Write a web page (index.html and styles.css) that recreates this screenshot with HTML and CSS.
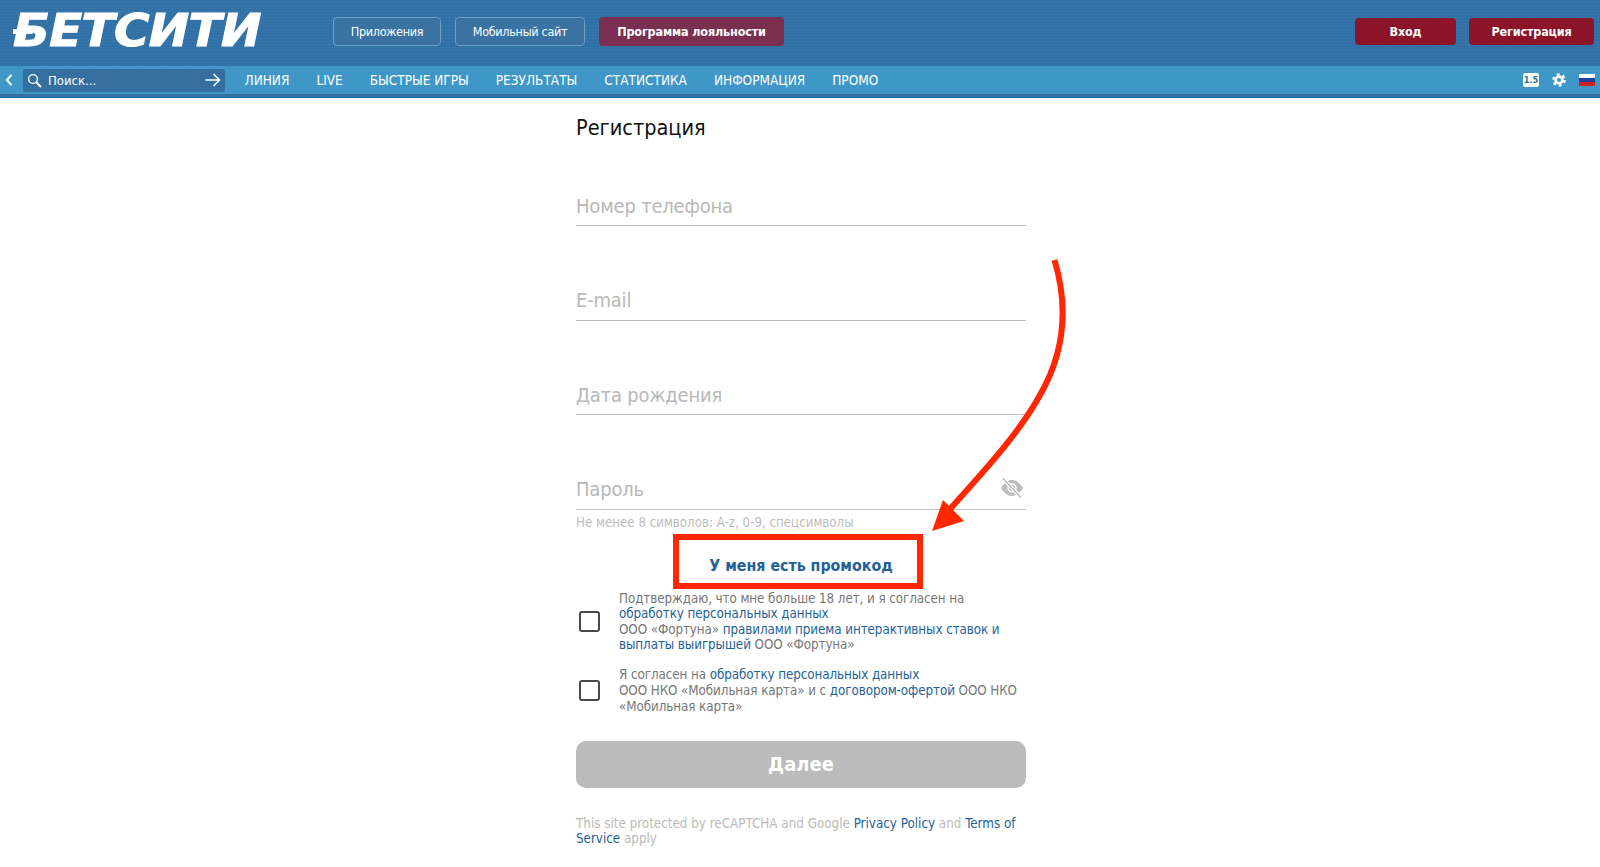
FILE: index.html
```html
<!DOCTYPE html>
<html lang="ru">

<head>
    <meta charset="utf-8">
    <title>Регистрация</title>
    <link rel="stylesheet" href="styles.css">
</head>

<body>
    <header class="top">
        <div class="logo-wrap"><a class="logo">БЕТСИТИ</a></div>
        <div class="top-links">
            <a class="btn btn-outline btn-apps">Приложения</a>
            <a class="btn btn-outline btn-mobile">Мобильный сайт</a>
            <a class="btn btn-loyal">Программа лояльности</a>
        </div>
        <div class="top-auth">
            <a class="btn btn-red btn-login">Вход</a>
            <a class="btn btn-red btn-signup">Регистрация</a>
        </div>
    </header>

    <nav class="nav">
        <svg class="nav-back" width="8" height="12" viewBox="0 0 8 12">
            <path d="M6.5 1 L1.8 6 L6.5 11" fill="none" stroke="#fff" stroke-width="2" />
        </svg>
        <div class="search">
            <svg width="15" height="15" viewBox="0 0 15 15">
                <circle cx="6" cy="6" r="4.4" fill="none" stroke="#fff" stroke-width="1.4" />
                <path d="M9.4 9.4 L14 14" stroke="#fff" stroke-width="2" />
            </svg>
            <input type="text" placeholder="Поиск...">
            <svg width="16" height="14" viewBox="0 0 16 14">
                <path d="M0.5 7 H14.5 M8.5 1 L14.5 7 L8.5 13" fill="none" stroke="#fff" stroke-width="1.5" />
            </svg>
        </div>
        <ul class="menu">
            <li>ЛИНИЯ</li>
            <li>LIVE</li>
            <li>БЫСТРЫЕ ИГРЫ</li>
            <li>РЕЗУЛЬТАТЫ</li>
            <li>СТАТИСТИКА</li>
            <li>ИНФОРМАЦИЯ</li>
            <li>ПРОМО</li>
        </ul>
        <div class="nav-tools">
            <span class="odds">1.5</span>
            <svg width="14" height="14" viewBox="0 0 14 14">
                <circle cx="7" cy="7" r="3.4" fill="none" stroke="#fff" stroke-width="2.6" />
                <circle cx="7" cy="7" r="5.6" fill="none" stroke="#fff" stroke-width="2.4" stroke-dasharray="2.9 2.96" />
            </svg>
            <span class="flag"></span>
        </div>
    </nav>
    <div class="nav-edge"></div>

    <main class="signup">
        <h1>Регистрация</h1>

        <div class="fields">
            <div class="field"><input type="text" placeholder="Номер телефона"></div>
            <div class="field"><input type="text" placeholder="E-mail"></div>
            <div class="field"><input type="text" placeholder="Дата рождения"></div>
            <div class="field">
                <input type="password" placeholder="Пароль">
                <svg class="eye" width="24" height="20" viewBox="0 0 24 20">
                    <path d="M1 10 C5 3.5 9 2 12 2 C15 2 19 3.5 23 10 C19 16.500 15 18 12 18 C9 18 5 16.500 1 10 Z" fill="#bdbdbd" />
                    <circle cx="12" cy="10" r="4" fill="none" stroke="#fff" stroke-width="1.500" />
                    <path d="M3 0.500 L21 19.500" stroke="#fff" stroke-width="3.600" />
                    <path d="M3 0.500 L21 19.500" stroke="#bdbdbd" stroke-width="1.500" />
                </svg>
            </div>
        </div>
        <p class="hint">Не менее 8 символов: A-z, 0-9, спецсимволы</p>

        <a class="promo">У меня есть промокод</a>

        <label class="agree agree-first">
            <input type="checkbox">
            <span>Подтверждаю, что мне больше 18 лет, и я согласен на<br>
                <a>обработку персональных данных</a><br>
                ООО «Фортуна» <a>правилами приема интерактивных ставок и</a><br>
                <a>выплаты выигрышей</a> ООО «Фортуна»</span>
        </label>
        <label class="agree">
            <input type="checkbox">
            <span>Я согласен на <a>обработку персональных данных</a><br>
                ООО НКО «Мобильная карта» и с <a>договором-офертой</a> ООО НКО<br>
                «Мобильная карта»</span>
        </label>

        <button class="next" type="button">Далее</button>

        <p class="recaptcha">This site protected by reCAPTCHA and Google <a>Privacy Policy</a> and <a>Terms of</a><br>
            <a>Service</a> apply</p>
    </main>

    <div class="mark-box"></div>
    <svg class="mark-arrow" width="150" height="290" viewBox="920 250 150 290">
        <path d="M1054.500 260 C1068 305 1066 350 1040 395 C1020 432 985 470 950 509" fill="none" stroke="#ff2600" stroke-width="6" />
        <path d="M932 531 L943 500 L964 521 Z" fill="#ff2600" />
    </svg>
</body>

</html>
```

FILE: styles.css
```css
* {
    box-sizing: border-box;
}

body {
    margin: 0;
    background-color: white;
    font-family: "DejaVu Sans Condensed", "DejaVu Sans", sans-serif;
    font-stretch: condensed;
    color: #777;
}

a {
    color: #1f6298;
}

.top {
    display: flex;
    align-items: center;
    height: 66px;
    padding: 0 6px 4px 13px;
    background-color: #3172a8;
    background-image:
        repeating-linear-gradient(0deg, rgba(255, 255, 255, 0.03) 0 1px, transparent 1px 3px),
        repeating-linear-gradient(90deg, rgba(0, 0, 0, 0.03) 0 1px, transparent 1px 3px);
}

.logo-wrap {
    width: 320px;
}

.logo {
    position: relative;
    display: inline-block;
    color: white;
    font-size: 44px;
    font-weight: bold;
    font-style: italic;
    font-stretch: normal;
    line-height: 44px;
    letter-spacing: -0.5px;
    -webkit-text-stroke: 1px white;
    transform: scaleX(1.22);
    transform-origin: left center;
}

.logo::before {
    content: "";
    position: absolute;
    left: 0;
    top: 20px;
    width: 16px;
    height: 5px;
    background-color: white;
}

.top-links {
    display: flex;
    gap: 14px;
}

.top-auth {
    display: flex;
    gap: 13px;
    margin-left: auto;
}

.btn {
    display: flex;
    align-items: center;
    justify-content: center;
    height: 29px;
    border-radius: 4px;
    color: white;
    font-size: 12.500px;
    letter-spacing: -0.3px;
}

.btn-outline {
    border: 1px solid #6fa0c8;
    background-color: #3a73a3;
}

.btn-apps {
    width: 108px;
}

.btn-mobile {
    width: 130px;
}

.btn-loyal {
    width: 185px;
    background-color: #7a2f50;
    font-weight: bold;
    letter-spacing: -0.15px;
}

.btn-red {
    height: 27px;
    background-color: #8b1428;
    font-weight: bold;
    letter-spacing: -0.15px;
}

.btn-login {
    width: 101px;
}

.btn-signup {
    width: 125px;
}

.nav {
    display: flex;
    align-items: center;
    height: 28px;
    padding: 0 5px 0 5px;
    background-color: #3f97c7;
}

.nav-back {
    margin-right: 10px;
}

.search {
    display: flex;
    align-items: center;
    width: 202px;
    height: 23px;
    padding: 0 4px 0 4px;
    border-radius: 2px;
    background-color: #346f9f;
}

.search input {
    flex: 1;
    min-width: 0;
    height: 20px;
    padding: 0 0 0 6px;
    border: none;
    outline: none;
    background: none;
    color: white;
    font: inherit;
    font-size: 13px;
}

.search input::placeholder {
    color: white;
    opacity: 1;
}

.menu {
    display: flex;
    gap: 27px;
    margin: 0 0 0 19.500px;
    padding: 0;
    list-style: none;
    color: white;
    font-size: 13.500px;
}

.nav-tools {
    display: flex;
    align-items: center;
    gap: 13px;
    margin-left: auto;
}

.odds {
    width: 16px;
    height: 14px;
    border-radius: 2px;
    background-color: white;
    color: #2f6c9e;
    font-size: 9px;
    font-weight: bold;
    line-height: 14px;
    text-align: center;
}

.flag {
    width: 16px;
    height: 12px;
    background: linear-gradient(#fff 0 33%, #1f3f9a 33% 66%, #d0201f 66%);
}

.nav-edge {
    height: 4px;
    border-bottom: 1px solid #0f68a2;
    background-color: #33709f;
}

.signup {
    width: 450px;
    margin: 0 574px 0 576px;
}

h1 {
    height: 30px;
    margin: 15px 0 35px;
    color: #111;
    font-size: 21.500px;
    font-weight: normal;
    line-height: 30px;
}

.fields {
    display: flex;
    flex-direction: column;
    gap: 46.500px;
}

.field {
    position: relative;
    height: 48px;
    border-bottom: 1px solid #bdbdbd;
}

.field input {
    width: 100%;
    height: 47px;
    padding: 8px 0 0;
    border: none;
    outline: none;
    background: none;
    font: inherit;
    font-size: 20px;
    letter-spacing: -0.2px;
}

.field input::placeholder {
    color: #b8b8b8;
    opacity: 1;
}

.eye {
    position: absolute;
    right: 2px;
    top: 16px;
}

.hint {
    margin: 5px 0 0;
    color: #bdbdbd;
    font-size: 13.200px;
    line-height: 16px;
}

.promo {
    display: block;
    margin-top: 25px;
    font-size: 15.800px;
    font-weight: bold;
    line-height: 20px;
    text-align: center;
}

.agree {
    display: flex;
    align-items: center;
    gap: 19px;
    padding-left: 3px;
    font-size: 13.300px;
    letter-spacing: -0.08px;
    line-height: 15.600px;
}

.agree-first {
    margin-top: 15px;
}

.agree + .agree {
    margin-top: 14.500px;
}

.agree input {
    flex: none;
    width: 21px;
    height: 21px;
    margin: 0;
    border: 2px solid #4a4a4a;
    border-radius: 3px;
    background-color: white;
    appearance: none;
}

.next {
    display: block;
    width: 100%;
    height: 47px;
    margin-top: 26.500px;
    border: none;
    border-radius: 10px;
    background-color: #bbb;
    color: white;
    font: inherit;
    font-size: 20px;
    font-weight: bold;
}

.recaptcha {
    margin: 28px 0 0;
    color: #bbb;
    font-size: 13.300px;
    line-height: 15.600px;
}

/* annotation drawn over the page */
.mark-box {
    position: absolute;
    left: 673px;
    top: 534px;
    width: 250px;
    height: 55px;
    border: 6px solid #ff2600;
}

.mark-arrow {
    position: absolute;
    left: 920px;
    top: 250px;
}
```
